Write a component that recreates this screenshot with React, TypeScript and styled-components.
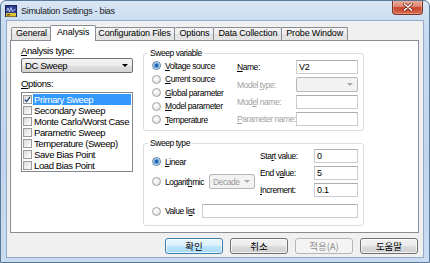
import React from "react";
import styled, { createGlobalStyle } from "styled-components";

const UI = `"Liberation Sans", Arial, sans-serif`;
const KR = `"Noto Sans CJK KR", "Liberation Sans", sans-serif`;

// narrow dialog text: Arial metrics squeezed with letter-spacing
const bigText = `font-size: 9.5px; letter-spacing: -0.4px;`;
const smallText = `font-size: 8.5px; letter-spacing: -0.45px;`;

const GlobalStyle = createGlobalStyle`
  html, body { margin: 0; padding: 0; }
  body { background: #ffffff; font-family: ${UI}; color: #000; }
  * { box-sizing: border-box; }
  u { text-decoration-thickness: 1px; text-underline-offset: 1px; }
`;

const Window = styled.div`
  width: 430px;
  height: 263px;
  border: 1px solid #5b7896;
  border-radius: 6px 6px 0 0;
  background: linear-gradient(180deg, #d8e6f6 0%, #c8dbf0 10%, #c0d5ec 60%, #cadcf1 100%);
  display: flex;
  flex-direction: column;
  padding-bottom: 4px;
  overflow: hidden;
`;

const TitleBar = styled.div`
  height: 19px;
  flex: none;
  display: flex;
  align-items: center;
  padding-left: 4px;
`;

const AppIcon = styled.svg`
  width: 12px;
  height: 12px;
  flex: none;
`;

const Title = styled.span`
  margin-left: 4px;
  font-size: 9px;
  letter-spacing: -0.3px;
  color: #1b1b1b;
  white-space: nowrap;
`;

const CloseButton = styled.div`
  margin-left: auto;
  margin-right: 6px;
  align-self: flex-start;
  margin-top: -1px;
  width: 31px;
  height: 15px;
  border: 1px solid #7a3024;
  border-top: none;
  border-radius: 0 0 4px 4px;
  background: linear-gradient(180deg, #eab0a2 0%, #de8a76 45%, #c9472f 55%, #d66a50 100%);
  box-shadow: inset 0 0 0 1px rgba(255, 255, 255, 0.3);
  display: flex;
  align-items: center;
  justify-content: center;
`;

const Client = styled.div`
  flex: 1;
  margin: 0 5px;
  border: 1px solid #92abc6;
  background: #f0f0f0;
  display: flex;
  flex-direction: column;
  padding: 4px 4px 3px 3px;
`;

const TabStrip = styled.div`
  height: 15px;
  flex: none;
  display: flex;
  align-items: flex-end;
  padding-left: 1px;
  position: relative;
  z-index: 1;
`;

const Tab = styled.div<{ $active?: boolean }>`
  height: ${(p) => (p.$active ? "16px" : "13px")};
  margin: ${(p) => (p.$active ? "0 -2px -1px -2px" : "0 0 0 -1px")};
  padding: ${(p) => (p.$active ? "0 6px" : "0 4px")};
  border: 1px solid #898c95;
  border-bottom: none;
  border-radius: 2px 2px 0 0;
  background: ${(p) =>
    p.$active ? "#ffffff" : "linear-gradient(180deg, #f4f4f4 0%, #ececec 50%, #e0e0e0 51%, #e6e6e6 100%)"};
  font-size: 9px;
  letter-spacing: -0.15px;
  line-height: ${(p) => (p.$active ? "12px" : "11px")};
  white-space: nowrap;
  position: relative;
  z-index: ${(p) => (p.$active ? 2 : 1)};
  &:first-child { margin-left: 0; }
`;

const Panel = styled.div`
  height: 193px;
  flex: none;
  border: 1px solid #898c95;
  background: #ffffff;
  display: grid;
  grid-template-columns: 112px 221px;
  column-gap: 10px;
  align-items: start;
  padding: 4px 10px 0;
`;

const LeftCol = styled.div`
  display: flex;
  flex-direction: column;
`;

const FieldLabel = styled.div<{ $gap?: number }>`
  height: 11px;
  line-height: 11px;
  ${bigText}
  margin-top: ${(p) => p.$gap ?? 0}px;
`;

const Caret = styled.span<{ $color?: string }>`
  margin-left: auto;
  width: 0;
  height: 0;
  border-left: 3px solid transparent;
  border-right: 3px solid transparent;
  border-top: 3px solid ${(p) => p.$color ?? "#000"};
  flex: none;
`;

const Combo = styled.div<{ $disabled?: boolean; $w?: number }>`
  height: 15px;
  width: ${(p) => (p.$w ? `${p.$w}px` : "auto")};
  border: 1px solid ${(p) => (p.$disabled ? "#b4b8bb" : "#707070")};
  border-radius: 2px;
  background: ${(p) =>
    p.$disabled ? "#f2f2f2" : "linear-gradient(180deg, #f4f4f4 0%, #ececec 50%, #dfdfdf 51%, #d4d4d4 100%)"};
  color: ${(p) => (p.$disabled ? "#9a9a9a" : "#000")};
  display: flex;
  align-items: center;
  padding: 0 4px 0 3px;
  ${(p) => (p.$disabled ? smallText : bigText)}
  white-space: nowrap;
`;

const ListBox = styled.div`
  height: 80px;
  margin-top: 3px;
  border: 1px solid #828790;
  background: #ffffff;
  padding-top: 1px;
`;

const ListItem = styled.div`
  height: 11px;
  display: flex;
  align-items: center;
  padding-left: 1px;
  ${bigText}
  line-height: 11px;
  white-space: nowrap;
`;

const CheckBox = styled.span`
  width: 9px;
  height: 9px;
  flex: none;
  border: 1px solid #9a9b9b;
  background: linear-gradient(135deg, #dadada 0%, #f0f0f0 60%, #fdfdfd 100%);
  display: flex;
  align-items: center;
  justify-content: center;
`;

const ItemText = styled.span<{ $selected?: boolean }>`
  flex: 1;
  height: 11px;
  margin: 0 1px;
  padding-left: 1px;
  background: ${(p) => (p.$selected ? "#3399ff" : "transparent")};
  color: ${(p) => (p.$selected ? "#ffffff" : "#000")};
`;

const RightCol = styled.div`
  display: flex;
  flex-direction: column;
  margin-top: 8px;
`;

const Group = styled.div<{ $h: number; $gap?: number }>`
  height: ${(p) => p.$h}px;
  margin-top: ${(p) => p.$gap ?? 0}px;
  border: 1px solid #d5dfe5;
  border-radius: 3px;
`;

const Caption = styled.div`
  width: fit-content;
  height: 10px;
  line-height: 10px;
  margin: -6px 0 0 4px;
  padding: 0 2px;
  background: #ffffff;
  ${smallText}
  white-space: nowrap;
`;

const VarBody = styled.div`
  display: flex;
  padding: 1px 0 0 8px;
`;

const RadioList = styled.div`
  width: 85px;
  display: flex;
  flex-direction: column;
`;

const RadioRow = styled.div<{ $h?: number }>`
  display: flex;
  align-items: center;
  height: ${(p) => p.$h ?? 13.5}px;
  ${smallText}
  white-space: nowrap;
`;

const Radio = styled.span<{ $on?: boolean }>`
  width: 9px;
  height: 9px;
  flex: none;
  margin-right: 4px;
  border-radius: 50%;
  border: 1px solid ${(p) => (p.$on ? "#5a7a9a" : "#a0a0a0")};
  background: ${(p) =>
    p.$on
      ? "radial-gradient(circle at 50% 50%, #154f93 0, #2f78c4 1.6px, #8cc0ea 2.6px, #e6eef6 3.4px)"
      : "radial-gradient(circle at 40% 35%, #ffffff 0, #ececec 55%, #d6d6d6 100%)"};
`;

const FieldGrid = styled.div<{ $cols: string; $top?: number }>`
  display: grid;
  grid-template-columns: ${(p) => p.$cols};
  row-gap: 3px;
  align-items: center;
  margin-top: ${(p) => p.$top ?? 0}px;
`;

const SmallLabel = styled.span<{ $disabled?: boolean }>`
  ${smallText}
  white-space: nowrap;
  color: ${(p) => (p.$disabled ? "#a2a2a2" : "#000")};
`;

const TextBox = styled.div<{ $grow?: boolean }>`
  height: 14px;
  flex: ${(p) => (p.$grow ? 1 : "none")};
  border: 1px solid #c9ccd2;
  border-top-color: #abadb3;
  background: #ffffff;
  padding-left: 2px;
  font-size: 9px;
  letter-spacing: -0.2px;
  line-height: 12px;
`;

const TypeTop = styled.div`
  display: grid;
  grid-template-columns: 108px 98px;
  padding-left: 8px;
`;

const TypeLeft = styled.div`
  display: flex;
  flex-direction: column;
  gap: 6px;
  padding-top: 7px;
`;

const ValueRow = styled.div`
  display: flex;
  align-items: center;
  height: 14px;
  margin-top: 7px;
  padding: 0 5px 0 8px;
`;

const ButtonRow = styled.div`
  height: 16px;
  flex: none;
  margin-top: 5px;
  padding-right: 1px;
  display: flex;
  justify-content: flex-end;
  gap: 7px;
`;

const Button = styled.div<{ $variant?: "default" | "disabled" }>`
  width: 58px;
  height: 16px;
  border-radius: 3px;
  border: 1px solid
    ${(p) => (p.$variant === "default" ? "#3c7fb1" : p.$variant === "disabled" ? "#b2b6b9" : "#707070")};
  background: ${(p) =>
    p.$variant === "default"
      ? "linear-gradient(180deg, #eaf6fd 0%, #d9f0fc 50%, #bee6fd 51%, #a7d9f5 100%)"
      : p.$variant === "disabled"
      ? "#f4f4f4"
      : "linear-gradient(180deg, #f2f2f2 0%, #ebebeb 50%, #dddddd 51%, #cfcfcf 100%)"};
  box-shadow: inset 0 0 0 1px ${(p) => (p.$variant === "disabled" ? "transparent" : "rgba(255,255,255,0.7)")};
  color: ${(p) => (p.$variant === "disabled" ? "#8d8d8d" : "#000")};
  font-family: ${KR};
  font-size: 9.5px;
  line-height: 14px;
  text-align: center;
`;

const tabs = ["General", "Analysis", "Configuration Files", "Options", "Data Collection", "Probe Window"];

const options = [
  "Primary Sweep",
  "Secondary Sweep",
  "Monte Carlo/Worst Case",
  "Parametric Sweep",
  "Temperature (Sweep)",
  "Save Bias Point",
  "Load Bias Point",
];

const sources: [string, string][] = [
  ["V", "oltage source"],
  ["C", "urrent source"],
  ["G", "lobal parameter"],
  ["M", "odel parameter"],
  ["T", "emperature"],
];

export default function App() {
  return (
    <>
      <GlobalStyle />
      <Window>
        <TitleBar>
          <AppIcon viewBox="0 0 12 12">
            <rect x="0.5" y="0.5" width="11" height="11" fill="#2f3c8f" stroke="#1b2256" />
            <polyline points="1.5,6 3,3 4.5,7 6,2.5 7.5,6.5 10.5,4" fill="none" stroke="#cfe0ff" strokeWidth="0.9" />
            <rect x="1" y="8" width="10" height="3.5" fill="#e0c12c" />
            <rect x="2" y="9" width="3" height="1.5" fill="#6b5a10" />
          </AppIcon>
          <Title>Simulation Settings - bias</Title>
          <CloseButton>
            <svg width="10" height="8" viewBox="0 0 10 8">
              <path d="M1.5 1 L8.5 7 M8.5 1 L1.5 7" stroke="#7a2a1e" strokeWidth="3" strokeLinecap="round" />
              <path d="M1.5 1 L8.5 7 M8.5 1 L1.5 7" stroke="#ffffff" strokeWidth="1.6" strokeLinecap="round" />
            </svg>
          </CloseButton>
        </TitleBar>
        <Client>
          <TabStrip>
            {tabs.map((t) => (
              <Tab key={t} $active={t === "Analysis"}>
                {t}
              </Tab>
            ))}
          </TabStrip>
          <Panel>
            <LeftCol>
              <FieldLabel>
                <u>A</u>nalysis type:
              </FieldLabel>
              <Combo style={{ marginTop: 2 }}>
                DC Sweep
                <Caret />
              </Combo>
              <FieldLabel $gap={5}>
                <u>O</u>ptions:
              </FieldLabel>
              <ListBox>
                {options.map((o, i) => (
                  <ListItem key={o}>
                    <CheckBox>
                      {i === 0 && (
                        <svg width="7" height="7" viewBox="0 0 7 7">
                          <polyline points="0.8,3.6 2.6,5.6 6.2,0.9" fill="none" stroke="#233f7c" strokeWidth="1.3" />
                        </svg>
                      )}
                    </CheckBox>
                    <ItemText $selected={i === 0}>{o}</ItemText>
                  </ListItem>
                ))}
              </ListBox>
            </LeftCol>

            <RightCol>
              <Group $h={78}>
                <Caption>Sweep variable</Caption>
                <VarBody>
                  <RadioList>
                    {sources.map(([k, rest], i) => (
                      <RadioRow key={k}>
                        <Radio $on={i === 0} />
                        <span>
                          <u>{k}</u>
                          {rest}
                        </span>
                      </RadioRow>
                    ))}
                  </RadioList>
                  <FieldGrid $cols="59px 62px" $top={1}>
                    <SmallLabel>
                      <u>N</u>ame:
                    </SmallLabel>
                    <TextBox>V2</TextBox>
                    <SmallLabel $disabled>
                      Model <u>t</u>ype:
                    </SmallLabel>
                    <Combo $disabled>
                      <Caret $color="#a8a8a8" />
                    </Combo>
                    <SmallLabel $disabled>
                      Mod<u>e</u>l name:
                    </SmallLabel>
                    <TextBox />
                    <SmallLabel $disabled>
                      <u>P</u>arameter name:
                    </SmallLabel>
                    <TextBox />
                  </FieldGrid>
                </VarBody>
              </Group>

              <Group $h={83} $gap={12}>
                <Caption>Sweep type</Caption>
                <TypeTop>
                  <TypeLeft>
                    <RadioRow $h={13}>
                      <Radio $on />
                      <span>
                        <u>L</u>inear
                      </span>
                    </RadioRow>
                    <RadioRow $h={15}>
                      <Radio />
                      <span>
                        Logarit<u>h</u>mic
                      </span>
                      <Combo $disabled $w={46} style={{ marginLeft: 5 }}>
                        Decade
                        <Caret $color="#a8a8a8" />
                      </Combo>
                    </RadioRow>
                  </TypeLeft>
                  <FieldGrid $cols="54px 44px" $top={1}>
                    <SmallLabel>
                      Sta<u>r</u>t value:
                    </SmallLabel>
                    <TextBox>0</TextBox>
                    <SmallLabel>
                      End v<u>a</u>lue:
                    </SmallLabel>
                    <TextBox>5</TextBox>
                    <SmallLabel>
                      <u>I</u>ncrement:
                    </SmallLabel>
                    <TextBox>0.1</TextBox>
                  </FieldGrid>
                </TypeTop>
                <ValueRow>
                  <RadioRow $h={14}>
                    <Radio />
                    <span>
                      Value li<u>s</u>t
                    </span>
                  </RadioRow>
                  <TextBox $grow style={{ marginLeft: 8 }} />
                </ValueRow>
              </Group>
            </RightCol>
          </Panel>
          <ButtonRow>
            <Button $variant="default">확인</Button>
            <Button>취소</Button>
            <Button $variant="disabled">적용(A)</Button>
            <Button>도움말</Button>
          </ButtonRow>
        </Client>
      </Window>
    </>
  );
}
